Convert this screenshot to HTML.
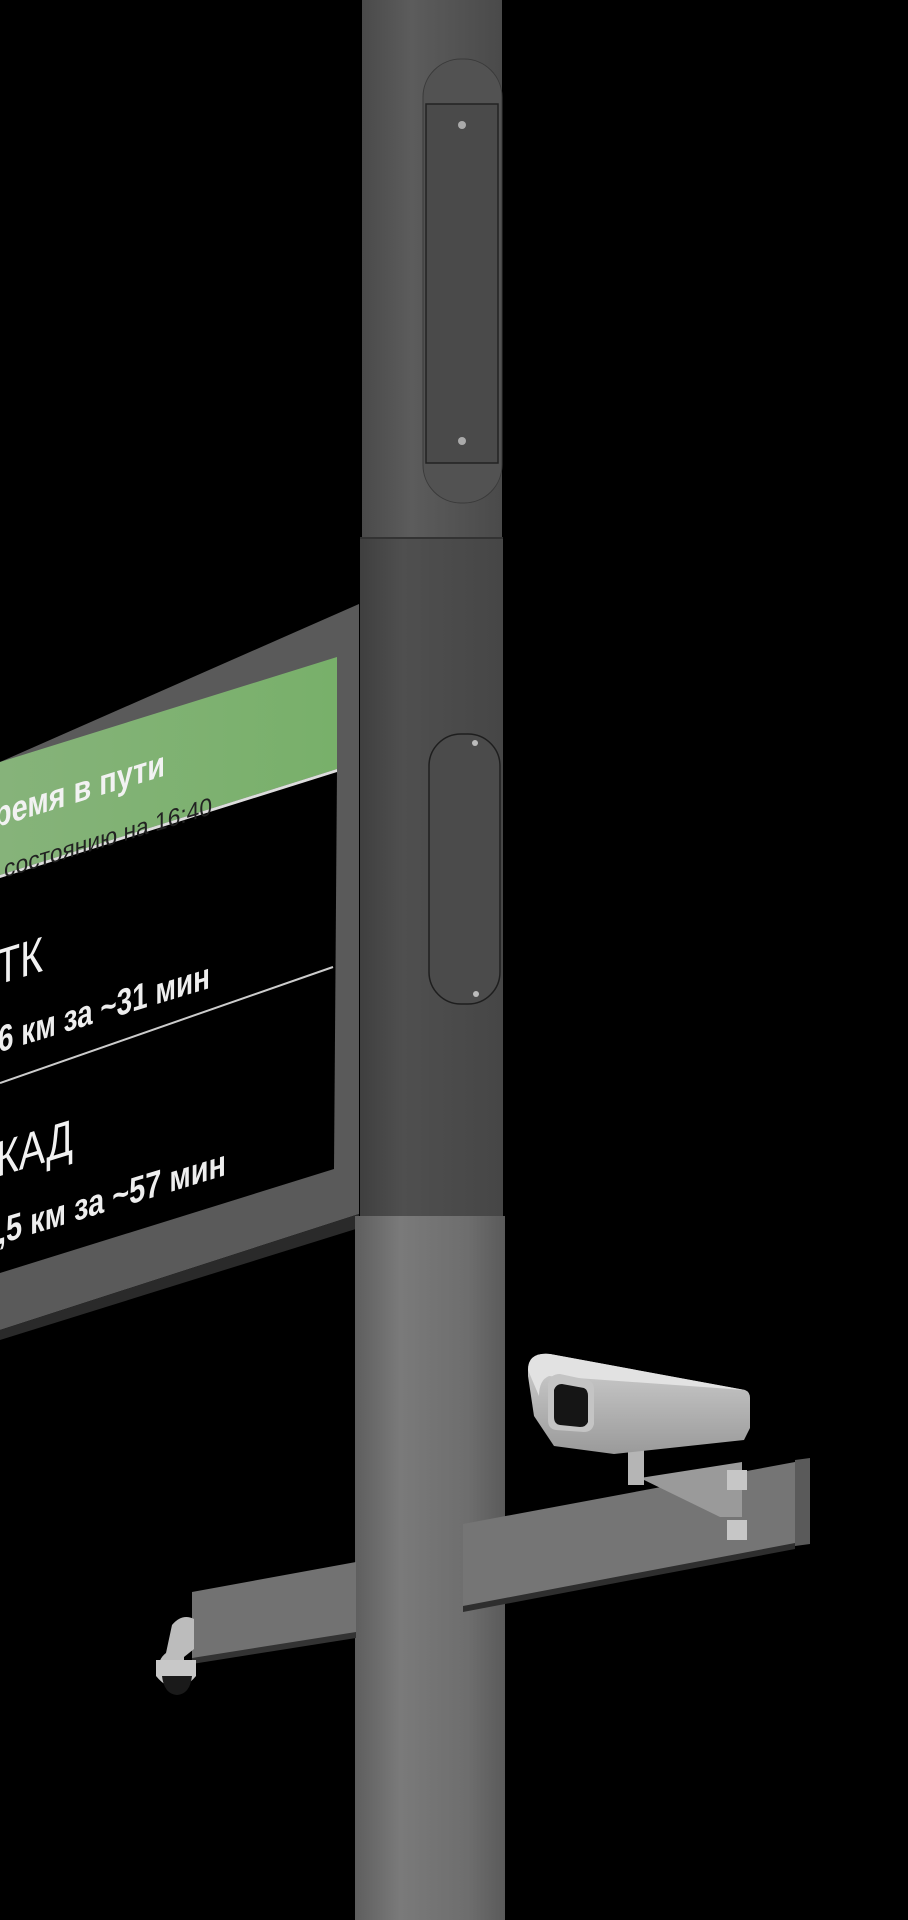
<!DOCTYPE html>
<html><head><meta charset="utf-8"><style>
html,body{margin:0;padding:0;background:#000;width:908px;height:1920px;overflow:hidden}
svg{display:block}
text{font-family:"Liberation Sans",sans-serif}
</style></head><body>
<svg width="908" height="1920" viewBox="0 0 908 1920" xmlns="http://www.w3.org/2000/svg">
<defs>
<linearGradient id="pt" x1="0" x2="1"><stop offset="0" stop-color="#4a4a4a"/><stop offset=".35" stop-color="#5c5c5c"/><stop offset="1" stop-color="#4a4a4a"/></linearGradient>
<linearGradient id="pm" x1="0" x2="1"><stop offset="0" stop-color="#3f3f3f"/><stop offset=".3" stop-color="#4f4f4f"/><stop offset="1" stop-color="#464646"/></linearGradient>
<linearGradient id="pl" x1="0" x2="1"><stop offset="0" stop-color="#5e5e5e"/><stop offset=".3" stop-color="#7a7a7a"/><stop offset=".75" stop-color="#6e6e6e"/><stop offset="1" stop-color="#5a5a5a"/></linearGradient>
<linearGradient id="gr" x1="0" x2="1"><stop offset="0" stop-color="#86b37a"/><stop offset="1" stop-color="#78b06a"/></linearGradient>
<linearGradient id="cam" x1="0" y1="0" x2="0" y2="1"><stop offset="0" stop-color="#d0d0d0"/><stop offset="1" stop-color="#9a9a9a"/></linearGradient>
</defs>
<rect width="908" height="1920" fill="#000"/>
<polygon points="0,762 359,604 359,1214 0,1330" fill="#5a5a5a"/>
<polygon points="0,1330 359,1214 359,1228 0,1340" fill="#2a2a2a"/>
<polygon points="0,875 337,769 334,1169 0,1273" fill="#000"/>
<polygon points="0,762 337,657 337,769 0,875" fill="url(#gr)"/>
<polygon points="0,875 337,769 337,772 0,878" fill="#ddd"/>
<line x1="0" y1="1083" x2="333" y2="967" stroke="#ccc" stroke-width="2"/>
<g transform="skewY(-17)">
<text x="-6" y="826" font-size="36" font-weight="bold" fill="#f2f2f2" textLength="171" lengthAdjust="spacingAndGlyphs">ремя в пути</text>
<text x="4" y="879" font-size="25" fill="#222" textLength="208" lengthAdjust="spacingAndGlyphs">состоянию на 16:40</text>
<text x="-4" y="984" font-size="50" fill="#f2f2f2" textLength="47" lengthAdjust="spacingAndGlyphs">ТК</text>
<text x="-2" y="1052" font-size="37" font-weight="bold" fill="#eee" textLength="212" lengthAdjust="spacingAndGlyphs">6 км за ~31 мин</text>
<text x="-4" y="1176" font-size="50" fill="#f2f2f2" textLength="77" lengthAdjust="spacingAndGlyphs">КАД</text>
<text x="-2" y="1244" font-size="37" font-weight="bold" fill="#eee" textLength="228" lengthAdjust="spacingAndGlyphs">,5 км за ~57 мин</text>
</g>
<rect x="362" y="0" width="140" height="540" fill="url(#pt)"/>
<rect x="360" y="538" width="143" height="682" fill="url(#pm)"/>
<rect x="355" y="1216" width="150" height="704" fill="url(#pl)"/>
<line x1="360" y1="538" x2="503" y2="538" stroke="#333" stroke-width="2"/>
<rect x="423" y="59" width="79" height="444" rx="38" fill="#525252" stroke="#3a3a3a"/>
<rect x="426" y="104" width="72" height="359" fill="#4a4a4a" stroke="#222" stroke-width="1.5"/>
<circle cx="462" cy="125" r="4" fill="#aaa"/><circle cx="462" cy="441" r="4" fill="#aaa"/>
<rect x="429" y="734" width="71" height="270" rx="32" fill="#4b4b4b" stroke="#1e1e1e" stroke-width="1.5"/>
<circle cx="475" cy="743" r="3" fill="#bbb"/><circle cx="476" cy="994" r="3" fill="#bbb"/>
<polygon points="192,1592 356,1562 356,1634 192,1660" fill="#727272"/>
<polygon points="192,1658 356,1632 356,1638 192,1664" fill="#333"/>
<path d="M172,1625 q10,-12 22,-6 l0,30 -10,8 0,14 -26,0 q0,-12 8,-18 z" fill="#bcbcbc"/>
<path d="M156,1660 h40 v16 q-20,24 -40,0 z" fill="#c8c8c8"/>
<path d="M162,1676 h30 q-2,18 -15,19 q-13,-1 -15,-19 z" fill="#1a1a1a"/>
<polygon points="463,1524 795,1462 795,1545 463,1608" fill="#757575"/>
<polygon points="795,1460 810,1458 810,1544 795,1546" fill="#5a5a5a"/>
<polygon points="463,1606 795,1543 795,1549 463,1612" fill="#2e2e2e"/>
<polygon points="640,1478 742,1462 742,1517 720,1517" fill="#9a9a9a"/>
<rect x="727" y="1470" width="20" height="20" fill="#c6c6c6"/>
<rect x="727" y="1520" width="20" height="20" fill="#c6c6c6"/>
<rect x="628" y="1440" width="16" height="45" fill="#b5b5b5"/>
<path d="M528,1370 q0,-18 22,-16 l195,36 q5,2 5,8 l0,30 -6,12 -130,14 -60,-8 -20,-30 -6,-40 z" fill="url(#cam)"/>
<path d="M528,1370 q0,-18 22,-16 l195,36 -196,-14 q-10,4 -10,20 z" fill="#e2e2e2"/>
<path d="M548,1384 q2,-10 12,-10 l28,6 q6,2 6,10 l0,34 q-2,8 -10,8 l-28,-2 q-8,-1 -8,-10 z" fill="#c4c4c4"/>
<path d="M554,1390 q2,-6 8,-6 l22,4 q4,2 4,8 l0,26 q-2,5 -8,5 l-20,-2 q-6,-1 -6,-8 z" fill="#151515"/>
</svg>
</body></html>
